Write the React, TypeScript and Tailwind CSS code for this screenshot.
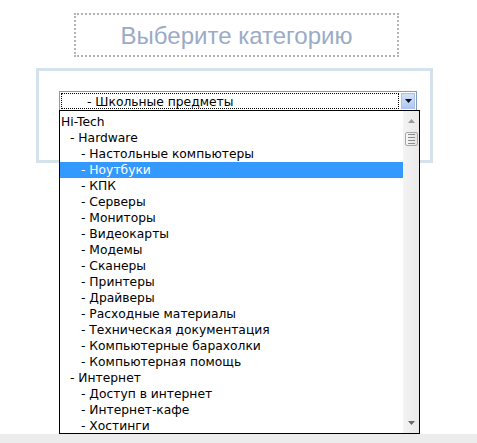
import React from "react";

interface Option {
  label: string;
  level: number;
  selected?: boolean;
}

const options: Option[] = [
  { label: "Hi-Tech", level: 0 },
  { label: "- Hardware", level: 1 },
  { label: "- Настольные компьютеры", level: 2 },
  { label: "- Ноутбуки", level: 2, selected: true },
  { label: "- КПК", level: 2 },
  { label: "- Серверы", level: 2 },
  { label: "- Мониторы", level: 2 },
  { label: "- Видеокарты", level: 2 },
  { label: "- Модемы", level: 2 },
  { label: "- Сканеры", level: 2 },
  { label: "- Принтеры", level: 2 },
  { label: "- Драйверы", level: 2 },
  { label: "- Расходные материалы", level: 2 },
  { label: "- Техническая документация", level: 2 },
  { label: "- Компьютерные барахолки", level: 2 },
  { label: "- Компьютерная помощь", level: 2 },
  { label: "- Интернет", level: 1 },
  { label: "- Доступ в интернет", level: 2 },
  { label: "- Интернет-кафе", level: 2 },
  { label: "- Хостинги", level: 2 },
];

const indent = ["pl-[1px]", "pl-[10px]", "pl-[21px]"];

// Полоса прокрутки в стиле XP
const ScrollBar = () => (
  <div className="w-[16px] h-full bg-gradient-to-r from-[#f3f3f3] to-[#eaeaea] flex flex-col items-center">
    <div className="h-[16px] w-full flex items-center justify-center mt-[2px]">
      <svg width="7" height="4" viewBox="0 0 7 4">
        <path d="M3.5 0 L7 4 L0 4 Z" fill="#9a9a9a" />
      </svg>
    </div>
    <div className="mt-[3px] w-[13px] h-[14px] rounded-[2px] border border-[#a8a8a8] bg-gradient-to-r from-[#f6f6f6] to-[#e2e2e2] flex flex-col items-center justify-center gap-[2px]">
      <div className="w-[7px] h-px bg-[#8c8c8c]" />
      <div className="w-[7px] h-px bg-[#8c8c8c]" />
      <div className="w-[7px] h-px bg-[#8c8c8c]" />
      <div className="w-[7px] h-px bg-[#8c8c8c]" />
    </div>
    <div className="flex-1" />
    <div className="h-[16px] w-full flex items-center justify-center mb-[2px]">
      <svg width="7" height="4" viewBox="0 0 7 4">
        <path d="M0 0 L7 0 L3.5 4 Z" fill="#6a6a6a" />
      </svg>
    </div>
  </div>
);

export default function App() {
  return (
    <div className="w-[477px] h-[443px] bg-white flex flex-col font-['DejaVu_Sans',sans-serif] text-[12.3px] text-black overflow-hidden">
      <div className="ml-[74px] mt-[13px] w-[325px] h-[44px] border-2 border-dotted border-[#b4b4b4] flex items-center justify-center">
        <span className="font-['Liberation_Sans',Arial,sans-serif] text-[24px] text-[#9aabc7] leading-none pt-[2px]">
          Выберите категорию
        </span>
      </div>

      <div className="ml-[36px] mt-[11px] w-[397px] h-[95px] border-[3px] border-[#d5e1eb] pt-[20px] pl-[20px]">
        <div className="relative w-[358px]">
          <div className="h-[20px] border border-[#7f9db9] flex items-stretch bg-white p-px">
            <div className="flex-1 border border-dotted border-black flex items-center pl-[25px] pt-[2px] leading-none">
              - Школьные предметы
            </div>
            <div className="w-[14px] ml-[2px] border border-[#a9c2ec] bg-gradient-to-b from-[#d3e2fb] to-[#aec8f3] flex items-center justify-center">
              <svg width="7" height="4" viewBox="0 0 7 4">
                <path d="M0 0 L7 0 L3.5 4 Z" fill="#111" />
              </svg>
            </div>
          </div>

          {/* Раскрытый список */}
          <div className="absolute left-0 top-[19px] w-[361px] h-[324px] border border-black bg-white flex overflow-hidden z-10">
            <div className="flex-1 pt-[3px]">
              {options.map((o) => (
                <div
                  key={o.label}
                  className={`h-[16px] flex items-center whitespace-nowrap leading-none ${indent[o.level]} ${
                    o.selected ? "bg-[#3399ff] text-white" : ""
                  }`}
                >
                  {o.label}
                </div>
              ))}
            </div>
            <ScrollBar />
          </div>
        </div>
      </div>

      <div className="flex-1" />
      <div className="h-[9px] bg-[#ececec]" />
    </div>
  );
}
